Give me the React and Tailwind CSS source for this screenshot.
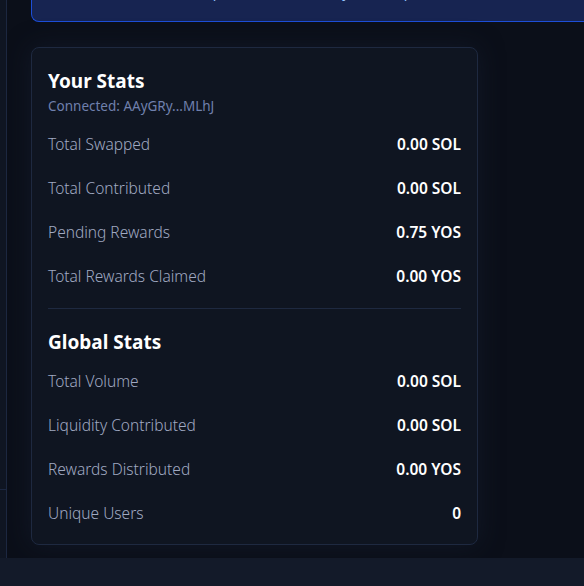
import React from "react";

const font = { fontFamily: '"Noto Sans", "Open Sans", sans-serif' };

function Row({ label, value }) {
  return (
    <div className="flex items-center justify-between py-3">
      <span className="text-[15.5px] leading-5 font-light text-[#a0a9c2]">{label}</span>
      <span className="text-[15.5px] leading-5 font-semibold text-white">{value}</span>
    </div>
  );
}

export default function App() {
  return (
    <div className="flex h-[586px] w-[584px] flex-col overflow-hidden bg-[#0b0f19]" style={font}>
      <div className="flex h-[558px] min-h-0">
        <aside className="flex w-[7px] shrink-0 flex-col border-r border-[#1c2740] bg-[#0f1522]">
          <div className="h-[490px] border-b border-[#1c2740]"></div>
        </aside>
        <main className="min-w-0 flex-1 overflow-hidden pl-6">
          <div className="-mt-[18px] w-[600px] rounded-bl-lg border-b border-l border-[#1d4ed8] bg-[#172451] pb-[19px] pl-[37px]">
            <p className="text-sm leading-5 text-[#93c5fd]">
              referrals. See the test panel below to verify the swap flow.
            </p>
          </div>
          <section className="mt-[25px] w-[447px] rounded-lg border border-[#1e2940] bg-[#0f1521] px-4 pt-[19px] pb-[9px] shadow-[0_0_24px_rgba(22,30,48,0.6)]">
            <h2 className="text-[19px] leading-7 font-bold text-white">Your Stats</h2>
            <p className="mt-[3px] text-[13.5px] leading-4 text-[#6f80ad]">Connected: AAyGRy...MLhJ</p>
            <div className="mt-[8px]">
              <Row label="Total Swapped" value="0.00 SOL" />
              <Row label="Total Contributed" value="0.00 SOL" />
              <Row label="Pending Rewards" value="0.75 YOS" />
              <Row label="Total Rewards Claimed" value="0.00 YOS" />
            </div>
            <div className="mt-[10px] border-t border-[#1e2940] pt-[19px]">
              <h2 className="text-[19px] leading-7 font-bold text-white">Global Stats</h2>
              <div className="mt-[3px]">
                <Row label="Total Volume" value="0.00 SOL" />
                <Row label="Liquidity Contributed" value="0.00 SOL" />
                <Row label="Rewards Distributed" value="0.00 YOS" />
                <Row label="Unique Users" value="0" />
              </div>
            </div>
          </section>
        </main>
      </div>
      <footer className="h-[28px] shrink-0 bg-[#131a29]"></footer>
    </div>
  );
}
